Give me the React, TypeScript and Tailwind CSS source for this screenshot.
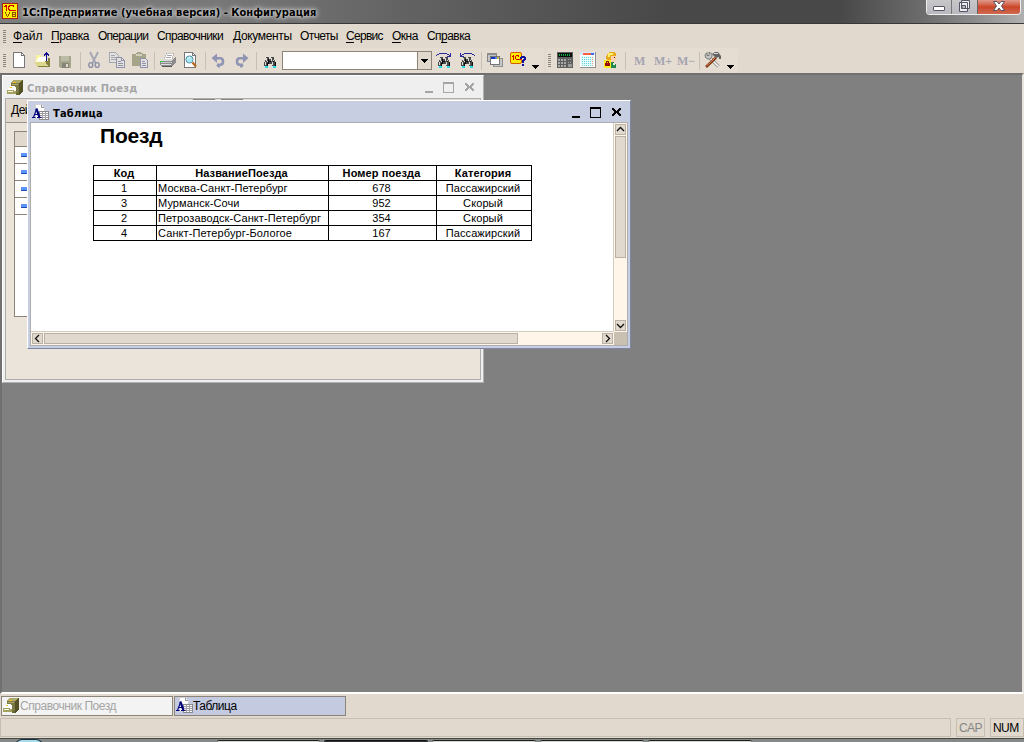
import React from "react";

type Kids = { children: React.ReactNode };

function Icon({ children }: Kids) {
  return (
    <svg width="18" height="18" viewBox="0 0 18 18" className="block shrink-0" shapeRendering="crispEdges">
      {children}
    </svg>
  );
}

const Grip = () => (
  <div className="flex h-[13px] w-[3px] shrink-0 flex-col justify-between">
    {[0, 1, 2, 3, 4, 5, 6].map((i) => (
      <i key={i} className="h-px bg-[#8a857c]" />
    ))}
  </div>
);

const Sep = () => <div className="h-[18px] w-px shrink-0 bg-[#c6c0b5]" />;

const DropArrow = () => (
  <svg width="7" height="4" viewBox="0 0 7 4" className="mt-3 block shrink-0" shapeRendering="crispEdges">
    <path d="M0 0H7V1H6V2H5V3H4V4H3V3H2V2H1V1H0Z" />
  </svg>
);

const PageIcon = () => (
  <Icon>
    <path d="M3.5 1.5H11.5L14.5 4.5V16.5H3.5Z" fill="#fff" stroke="#77777b" />
    <path d="M11.5 2V4.5H14" fill="none" stroke="#77777b" />
  </Icon>
);

const OpenIcon = () => (
  <Icon>
    <path d="M3 4H7L9 6H14V10H3Z" fill="#f8f59a" />
    <path d="M4 8L7 6H14V11H4Z" fill="#fff" />
    <path d="M1 10H12L15 16H4Z" fill="#ddd890" />
    <path d="M2 10H12" stroke="#fffbd0" />
    <path d="M15 7H17V16H5V15H15L12 10H15Z" fill="#85803a" />
    <path d="M13 1H14V2H15V3H16V5H15V4H14V10H13V4H12V5H11V3H12V2H13Z" fill="#10108c" />
  </Icon>
);

const SaveIcon = () => (
  <Icon>
    <path d="M3 5H15V17H4L3 16Z" fill="#a5a58c" />
    <path d="M5 5H13V10H5Z" fill="#bcbca4" />
    <path d="M6 12H13V17H6Z" fill="#858577" />
    <path d="M10 13H12V16H10Z" fill="#dedace" />
  </Icon>
);

const CutIcon = () => (
  <Icon>
    <g shapeRendering="auto" fill="none">
      <path d="M5 1L10.5 12M13 1L7.5 12" stroke="#a3a5b5" strokeWidth="1.8" />
      <ellipse cx="5.8" cy="14" rx="2" ry="2.4" stroke="#8e90a8" strokeWidth="1.4" />
      <ellipse cx="12.2" cy="14" rx="2" ry="2.4" stroke="#8e90a8" strokeWidth="1.4" />
    </g>
  </Icon>
);

const CopyIcon = () => (
  <Icon>
    <path d="M1.5 1.5H7.5L10.5 4.5V11.5H1.5Z" fill="#e4e1dc" stroke="#a5a7b5" />
    <path d="M3 4.5H7M3 6.5H8M3 8.5H8" stroke="#a5a7b5" />
    <path d="M8.5 6.5H13.5L16.5 9.5V16.5H8.5Z" fill="#e4e1dc" stroke="#8f93ad" />
    <path d="M10 10.5H13M10 12.5H15M10 14.5H15M13.5 7V9.5H16" fill="none" stroke="#8f93ad" />
  </Icon>
);

const PasteIcon = () => (
  <Icon>
    <path d="M1 3H4L5 2H6V1H10V2H11L12 3H15V15H1Z" fill="#a5a58a" />
    <path d="M5 3H11V5H5Z" fill="#d0cfb9" />
    <path d="M9.5 7.5H14.5L16.5 9.5V16.5H9.5Z" fill="#e4e1dc" stroke="#8f93ad" />
    <path d="M11 10.5H14M11 12.5H15M11 14.5H15" stroke="#8f93ad" />
  </Icon>
);

const PrintIcon = () => (
  <Icon>
    <path d="M5 8L8 2H15L13 8Z" fill="#fff" stroke="#a6a6a6" strokeWidth="0.6" />
    <path d="M8 4.5H13M7 6.5H12" stroke="#a5a5a5" />
    <path d="M1 10L4 8H14L17 6V11L13 15H2L1 14Z" fill="#8c8c8c" />
    <path d="M1 10L4 8H14L13 10Z" fill="#dadada" />
    <path d="M2 11.5H13" stroke="#c8c8c8" />
    <path d="M2 13.5H12" stroke="#e0e0e0" />
    <path d="M3 15.5H13" stroke="#555" />
    <path d="M1 10H4V11H1Z" fill="#25d42a" />
  </Icon>
);

const PreviewIcon = () => (
  <Icon>
    <path d="M3.5 1.5H11.5L14.5 4.5V16.5H3.5Z" fill="#fff" stroke="#77777b" />
    <path d="M11.5 2V4.5H14" fill="none" stroke="#77777b" />
    <g shapeRendering="auto">
      <circle cx="8.5" cy="8.5" r="3.6" fill="#a8e8f2" stroke="#5d91a5" />
      <path d="M7 7.5Q8 6 9 6.5" stroke="#fff" fill="none" />
      <path d="M11.5 11.5L15 15.5" stroke="#b8651d" strokeWidth="2.2" />
    </g>
  </Icon>
);

const TurnPath = () => (
  <g shapeRendering="auto">
    <path d="M6 6.2H10.2Q13 6.2 13 9.4Q13 12.6 10.2 12.8H7" fill="none" stroke="#9195b4" strokeWidth="2.6" />
    <path d="M1.5 6L7 1.5V11Z" fill="#9195b4" />
    <path d="M6 13H10V15.5H8Z" fill="#9195b4" />
  </g>
);

const UndoIcon = () => (
  <Icon>
    <TurnPath />
  </Icon>
);

const RedoIcon = () => (
  <Icon>
    <g transform="translate(17 0) scale(-1 1)">
      <TurnPath />
    </g>
  </Icon>
);

const Glasses = () => (
  <>
    <path d="M5 5H8V7H10V5H13V8H14V10H15V15H11V12H7V15H3V10H4V8H5Z" fill="#4a4a4a" />
    <path d="M5 6H6V9H5ZM10 6H11V9H10ZM4 10H5V13H4ZM11 10H12V13H11ZM6 9H7V10H6ZM12 8H13V9H12Z" fill="#dcdcdc" />
    <path d="M7 7H8V12H7ZM12 9H13V10H12ZM6 11H7V14H6ZM14 10H15V14H14ZM8 9H10V10H8Z" fill="#0c0c0c" />
    <path d="M4 14H7V16H4ZM12 14H15V16H12Z" fill="#29d8e2" />
    <path d="M3 14H4V15H3ZM11 14H12V15H11Z" fill="#bff" />
  </>
);

const FindIcon = () => (
  <Icon>
    <Glasses />
  </Icon>
);

const FindNextIcon = () => (
  <Icon>
    <Glasses />
    <path d="M1 3H2V4H1ZM2 2H4V3H2ZM4 1H12V2H4ZM12 2H14V3H12ZM14 3H15V4H14ZM15 1H16V5H12V4H15Z" fill="#29299a" />
  </Icon>
);

const FindPrevIcon = () => (
  <Icon>
    <Glasses />
    <g transform="translate(18 0) scale(-1 1)">
      <path d="M1 3H2V4H1ZM2 2H4V3H2ZM4 1H12V2H4ZM12 2H14V3H12ZM14 3H15V4H14ZM15 1H16V5H12V4H15Z" fill="#29299a" />
    </g>
  </Icon>
);

const WindowsIcon = () => (
  <Icon>
    <path d="M1.5 2.5H10.5V10.5H1.5Z" fill="#c4c4c4" stroke="#858585" />
    <path d="M1 2H11V4H1Z" fill="#8c8c8c" />
    <path d="M7.5 7.5H16.5V15.5H7.5Z" fill="#c8c8c8" stroke="#909090" />
    <path d="M4.5 5.5H13.5V13.5H4.5Z" fill="#fff" stroke="#777" />
    <path d="M5 6H9V8H5Z" fill="#1238c0" />
    <path d="M9 6H11V8H9Z" fill="#5578d8" />
    <path d="M11 6H13V8H11Z" fill="#d9b640" />
  </Icon>
);

const HelpIcon = () => (
  <Icon>
    <rect x="0.5" y="1.5" width="11" height="11" rx="1.5" fill="#ffed00" stroke="#d95a00" shapeRendering="auto" />
    <path d="M2 5H3V4H4V9H3V6H2ZM6 4H9V5H6ZM5 5H6V8H5ZM6 8H11V9H6ZM8 5H9V6H8Z" fill="#d40000" />
    <path d="M11 5H15V6H16V9H15V10H14V12H12V9H13V8H14V7H12V8H10V6H11ZM12 13H14V15H12Z" fill="#11119b" />
  </Icon>
);

const CalcIcon = () => (
  <Icon>
    <path d="M1 1H17V17H1Z" fill="#5f5f5f" />
    <path d="M2 2H16V6H2Z" fill="#0c0c0c" />
    <path d="M3 4H15" stroke="#11b047" strokeWidth="2" strokeDasharray="1 1" />
    <path d="M2 8.5H10M2 11.5H10M2 14.5H10" stroke="#a8a8a8" strokeWidth="2" strokeDasharray="2 1" />
    <path d="M12 8.5H16M12 11.5H16" stroke="#aaa" strokeDasharray="1 1" />
    <path d="M12 13H16V16H12Z" fill="#999" />
  </Icon>
);

const CalendarIcon = () => (
  <Icon>
    <path d="M1 1H17V17H1Z" fill="#8f8f8f" />
    <path d="M1 1H16V16H1Z" fill="#fff" />
    <path d="M1 1H16V4H1Z" fill="#d8e9ff" />
    <path d="M4 3H12" stroke="#ff6041" strokeWidth="2" />
    <path d="M12 3H15" stroke="#4169e2" strokeWidth="2" />
    <path d="M2 5H15V15H2Z" fill="#e2fbfb" />
    <path d="M3 6.5H15M3 8.5H15M3 10.5H15M3 12.5H15M3 14.5H15" stroke="#6cd2da" strokeDasharray="1 1" />
    <path d="M13.5 6V15" stroke="#ff9d78" strokeDasharray="1 1" />
  </Icon>
);

const UserIcon = () => (
  <Icon>
    <path d="M5 3L7 1H12L14 3V6H11V10H6L4 7Z" fill="#e9a91c" />
    <path d="M6 2H11V4H8V6H6Z" fill="#fff06b" />
    <path d="M9 5H14V9L12 12H9Z" fill="#ffd1b0" />
    <path d="M12 6H13V7H12Z" fill="#3a2a18" />
    <path d="M9 11H11L14 14V17H9Z" fill="#208a4e" />
    <path d="M11 12H13V14H11Z" fill="#f0f0e0" />
    <path d="M2 9H9V17H2Z" fill="#ffee19" />
    <path d="M3 12H8V15H3Z" fill="#970c0c" />
    <path d="M4.5 12V10.5H6.5V12" fill="none" stroke="#970c0c" />
  </Icon>
);

const ToolsIcon = () => (
  <Icon>
    <g shapeRendering="auto">
      <path d="M5 6L14.5 15.5" stroke="#777" strokeWidth="3" />
      <path d="M6 7L14.5 15.5" stroke="#fff" strokeWidth="1.6" />
      <path d="M1 4L3 1.5V4.5H5V1L8 3V6L6 8H4L1.5 6.5Z" fill="#c5c5c5" stroke="#666" strokeWidth="0.8" />
      <path d="M12 6.5L2 16" stroke="#7d3010" strokeWidth="2.6" />
      <path d="M12 6L2.5 15" stroke="#e09860" />
      <path d="M8 3L11 1H14L17 5V8H15V6L12 7Z" fill="#636363" />
      <path d="M10 2.5H14" stroke="#ddd" />
    </g>
  </Icon>
);

const CatalogIcon = () => (
  <Icon>
    <path d="M4 3L7 1H16L13 4H4Z" fill="#aba96c" />
    <path d="M4 4H12V15H4Z" fill="#7c7a44" />
    <path d="M12 4L16 1V12L12 16Z" fill="#545225" />
    <path d="M6 3H9V4H6Z" fill="#ffbd19" />
    <path d="M5 5.5H11" stroke="#aaa870" />
    <path d="M1 9L3 7H7L9 9V13H1Z" fill="#fff" />
    <path d="M3 8H5V9H3Z" fill="#ffbd19" />
    <path d="M0 11H7V12H9V15H0Z" fill="#a3a162" />
    <path d="M1 12H6V13H1Z" fill="#fffbe0" />
    <path d="M9 14H12V16H9Z" fill="#6b692f" />
  </Icon>
);

const TableIcon = () => (
  <Icon>
    <path d="M3.5 0.5H9.5L12.5 3.5V14.5H3.5Z" fill="#fff" stroke="#d0d0d8" />
    <path d="M9.5 1V3.5H12" fill="none" stroke="#999" />
    <path d="M7.5 7.5H16.5V15.5H7.5Z" fill="#fff" stroke="#8a8a8e" />
    <path d="M8 9.5H16M8 11.5H16M8 13.5H16M10.5 8V15M13.5 8V15" stroke="#a0a0a4" />
    <g shapeRendering="auto" stroke="#00007b" fill="none">
      <path d="M1.6 13L4.6 5" strokeWidth="1.1" />
      <path d="M4.3 4.5L7.4 13" strokeWidth="2.2" />
      <path d="M2.5 10.5H6" />
      <path d="M0 13.5H3.5M5 13.5H9.5" />
    </g>
  </Icon>
);

function WindowButtons() {
  return (
    <svg width="52" height="12" viewBox="0 0 52 12" className="block" shapeRendering="crispEdges" fill="currentColor">
      <path d="M0 9H8V11H0Z" />
      <path fillRule="evenodd" d="M18 0H29V11H18ZM19 2V10H28V2Z" />
      <path d="M40 1H42V2H43V3H44V4H45V3H46V2H47V1H49V3H48V4H47V6H48V7H49V9H47V8H46V7H45V6H44V7H43V8H42V9H40V7H41V6H42V4H41V3H40Z" />
    </svg>
  );
}

const menus: [string, string, string, string][] = [
  ["", "Ф", "айл", "w-[38px] tracking-[0px]"],
  ["", "П", "равка", "w-[47px] tracking-[-0.4px]"],
  ["", "", "Операции", "w-[59px] tracking-[-0.75px]"],
  ["", "", "Справочники", "w-[76px] tracking-[-0.6px]"],
  ["", "", "Документы", "w-[67px] tracking-[-0.35px]"],
  ["", "", "Отчеты", "w-[46px] tracking-[-0.6px]"],
  ["", "С", "ервис", "w-[46px] tracking-[-0.7px]"],
  ["", "О", "кна", "w-[35px] tracking-[-0.5px]"],
  ["Сп", "р", "авка", "w-[50px] tracking-[-0.55px]"],
];

const rows = [
  ["1", "Москва-Санкт-Петербург", "678", "Пассажирский"],
  ["3", "Мурманск-Сочи", "952", "Скорый"],
  ["2", "Петрозаводск-Санкт-Петербург", "354", "Скорый"],
  ["4", "Санкт-Петербург-Бологое", "167", "Пассажирский"],
];

function ScrollButton({ d }: { d: string }) {
  return (
    <div className="h-[11px] w-[11px] shrink-0 border border-[#b8b1a4] bg-[#e1d9cd]">
      <svg width="9" height="9" viewBox="0 0 9 9" className="block">
        <path d={d} stroke="#111" strokeWidth="1.3" fill="none" />
      </svg>
    </div>
  );
}

function CatalogWindow() {
  return (
    <section className="absolute left-0 top-0 flex h-[308px] w-[482px] flex-col border border-b-[#b0b0b0] border-l-white border-r-[#b0b0b0] border-t-white bg-[#efefef] px-[2px] pb-[2px]">
      <header className="flex h-[22px] shrink-0 items-center pl-[2px] pt-[2px] text-[#a5a5a5]">
        <CatalogIcon />
        <span className="ml-[2px] grow whitespace-nowrap pt-[2px] font-['DejaVu_Sans_Condensed'] text-[11px] font-bold leading-[16px] tracking-[0.2px]">Справочник Поезд</span>
        <WindowButtons />
        <span className="w-[4px]" />
      </header>
      <div className="flex grow flex-col border border-[#adadad] bg-[#ebe4da]">
        <div className="flex h-[24px] shrink-0 border-b border-[#999287] bg-[#e1d9cd] pl-[5px] text-[12px] leading-[23px] tracking-[-0.5px]">
          <span className="w-[30px]">Дей</span>
          <span className="ml-[152px] h-px w-[22px] bg-[#8b8579]" />
          <span className="ml-[6px] h-px w-[22px] bg-[#8b8579]" />
        </div>
        <div className="ml-[8px] mt-[8px] flex h-[186px] w-[430px] flex-col border border-[#8c8577] bg-white">
          <div className="h-[15px] border-b border-[#8c8577] bg-[#e1d9cd]" />
          {rows.map((r) => (
            <div key={r[0]} className="flex h-[17px] items-center border-b border-[#8c8577] pl-[6px]">
              <span className="h-[4px] w-[9px] border-b border-[#254caa] bg-[#5b93ff]" />
            </div>
          ))}
        </div>
      </div>
    </section>
  );
}

function TableWindow() {
  const cell = "border border-black py-0 pl-0 pr-[2px] h-[15px] leading-[14px]";
  return (
    <section className="absolute left-[25px] top-[25px] flex h-[249px] w-[604px] flex-col border border-b-[#7d87a4] border-l-white border-r-[#7d87a4] border-t-white bg-[#c8cee2] pb-[2px] pl-[2px] pr-[2px]">
      <header className="flex h-[21px] shrink-0 items-center pl-[2px] pt-[2px]">
        <TableIcon />
        <span className="ml-[3px] grow pt-[2px] font-['DejaVu_Sans_Condensed'] text-[11px] font-bold leading-[16px] tracking-[0.2px]">Таблица</span>
        <WindowButtons />
        <span className="w-[4px]" />
      </header>
      <div className="flex grow flex-col border border-[#adadad] bg-white">
        <div className="flex h-[209px]">
          <div className="grow overflow-hidden border-b border-r border-[#d0ccc4] pl-[62px]">
            <h1 className="ml-[7px] mt-px h-[24px] text-[21px] font-bold leading-[24px] tracking-[-0.2px]">Поезд</h1>
            <table className="mt-[17px] w-[439px] table-fixed border-collapse text-center text-[11px]">
              <colgroup>
                <col className="w-[63px]" />
                <col className="w-[172px]" />
                <col className="w-[108px]" />
                <col className="w-[95px]" />
              </colgroup>
              <thead>
                <tr className="tracking-[0.1px]">
                  <th className={cell}>Код</th>
                  <th className={cell}>НазваниеПоезда</th>
                  <th className={cell}>Номер поезда</th>
                  <th className={cell}>Категория</th>
                </tr>
              </thead>
              <tbody>
                {rows.map((r) => (
                  <tr key={r[0]} className="tracking-[0.1px]">
                    <td className={cell}>{r[0]}</td>
                    <td className="h-[15px] whitespace-nowrap border border-black py-0 pl-[1px] pr-0 text-left leading-[14px]">{r[1]}</td>
                    <td className={cell}>{r[2]}</td>
                    <td className={cell}>{r[3]}</td>
                  </tr>
                ))}
              </tbody>
            </table>
          </div>
          <div className="flex w-[13px] shrink-0 flex-col items-center bg-[#fff5e9] py-px">
            <ScrollButton d="M1 6L4.5 2.5L8 6" />
            <div className="mt-px h-[122px] w-[11px] border border-[#b8b1a4] bg-[#e1d9cd]" />
            <div className="grow" />
            <ScrollButton d="M1 3L4.5 6.5L8 3" />
          </div>
        </div>
        <div className="flex h-[13px] bg-[#fff5e9]">
          <div className="flex grow items-center pl-px pr-px">
            <ScrollButton d="M6 1L2.5 4.5L6 8" />
            <div className="ml-px h-[11px] w-[474px] border border-[#b8b1a4] bg-[#e1d9cd]" />
            <div className="grow" />
            <ScrollButton d="M3 1L6.5 4.5L3 8" />
          </div>
          <div className="w-[13px] bg-[#c9c0b2]" />
        </div>
      </div>
    </section>
  );
}

export default function App() {
  return (
    <div className="flex h-[742px] w-[1024px] flex-col overflow-hidden bg-[#e1d9cd] font-['Liberation_Sans',sans-serif] text-black">
      <header className="flex h-[24px] shrink-0 border-b border-[#37383a] bg-[linear-gradient(90deg,#7d7d7d_0%,#777_22%,#626262_40%,#484848_65%,#484848_82%,#6c6c6c_90%,#8a8a8a_95%,#b0b0b0_100%)]">
        <svg width="17" height="17" viewBox="0 0 17 17" className="ml-[1px] mt-[3px] block shrink-0" shapeRendering="crispEdges">
          <rect x="1" y="0" width="16" height="16" rx="1" fill="#a92010" />
          <rect x="2" y="1" width="14" height="14" fill="#ffee00" />
          <path d="M3 3H4V2H6V8H5V4H3ZM8 2H13V4H12V3H9V4H8V6H9V7H15V8H8V7H7V3H8Z" fill="#d40000" />
          <path d="M4 9H5V11H6V13H7V11H8V9H9V11H8V13H7V14H6V13H5V11H4ZM11 9H15V14H11ZM12 10V11H14V10ZM12 12V13H14V12Z" fill="#8d5000" fillRule="evenodd" />
        </svg>
        <h1 className="ml-[4px] w-[300px] whitespace-nowrap pt-px font-['DejaVu_Sans_Condensed'] text-[11px] font-bold leading-[24px] tracking-[0.05px] [text-shadow:0_0_3px_#ddd,0_0_5px_#ccc,0_0_7px_#bbb]">1С:Предприятие (учебная версия) - Конфигурация</h1>
        <div className="ml-auto mr-[3px] flex h-[15px] w-[95px] overflow-hidden rounded-b-[4px] border border-t-0 border-[#eee]">
          <div className="flex w-[25px] items-end justify-center border-r border-[#777] bg-linear-to-b from-[#c8c8ca] to-[#b8b8be] pb-[3px]">
            <i className="h-[5px] w-[12px] rounded-[1px] border border-[#555566] bg-white" />
          </div>
          <div className="flex w-[26px] justify-center border-r border-[#666] bg-linear-to-b from-[#c8c8ca] to-[#b8b8be]">
            <svg width="13" height="13" viewBox="0 0 13 13" className="block">
              <path d="M3.5 0.5H11.5V8.5H3.5ZM1.5 2.5H9.5V11.5H1.5Z" fill="#eee" stroke="#555566" />
              <path d="M4 5.5H7.5V8.5H4Z" fill="#bbb" stroke="#555566" />
            </svg>
          </div>
          <div className="flex grow justify-center bg-linear-to-b from-[#e09a8c] via-[#cb4528] to-[#cf6a50]">
            <svg width="14" height="13" viewBox="0 0 14 13" className="block">
              <path d="M1.5 1.5H5L7 4L9 1.5H12.5L9.5 6L12.5 10.5H9L7 8L5 10.5H1.5L4.5 6Z" fill="#fff" stroke="#555566" />
            </svg>
          </div>
        </div>
      </header>

      <nav className="flex h-[24px] shrink-0 items-center pl-[3px] text-[12px]">
        <Grip />
        <span className="w-[7px] shrink-0" />
        {menus.map(([before, key, after, style]) => (
          <span key={before + key + after} className={`${style} shrink-0 whitespace-nowrap`}>
            {before}
            <u className="underline-offset-2">{key}</u>
            {after}
          </span>
        ))}
      </nav>

      <div className="flex h-[25px] shrink-0 items-center">
        <div className="flex h-[25px] w-[544px] items-center rounded-[3px] bg-[#e5ddd2] pl-[3px]">
          <Grip />
          <div className="ml-[4px] flex items-center gap-[5px] pb-[2px]">
            <PageIcon /><OpenIcon /><SaveIcon />
          </div>
          <div className="ml-[6px] mr-[4px]"><Sep /></div>
          <div className="flex items-center gap-[5px] pb-[2px]">
            <CutIcon /><CopyIcon /><PasteIcon />
          </div>
          <div className="ml-[5px] mr-[4px]"><Sep /></div>
          <div className="flex items-center gap-[4px] pb-[2px]">
            <PrintIcon /><PreviewIcon />
          </div>
          <div className="ml-[6px] mr-[4px]"><Sep /></div>
          <div className="flex items-center gap-[5px]">
            <UndoIcon /><RedoIcon />
          </div>
          <div className="ml-[5px] mr-[4px]"><Sep /></div>
          <FindIcon />
          <div className="ml-[3px] flex h-[19px] w-[150px] border border-[#8c8577] bg-white">
            <span className="grow" />
            <div className="flex w-[14px] justify-center border-l border-[#8c8577] bg-[#e1d9cd]">
              <svg width="7" height="4" viewBox="0 0 7 4" className="mt-[7px] block" shapeRendering="crispEdges">
                <path d="M0 0H7V1H6V2H5V3H4V4H3V3H2V2H1V1H0Z" />
              </svg>
            </div>
          </div>
          <div className="ml-[3px] flex items-center gap-[5px]">
            <FindNextIcon /><FindPrevIcon />
          </div>
          <div className="ml-[5px] mr-[4px]"><Sep /></div>
          <div className="flex items-center gap-[6px] pb-px">
            <WindowsIcon /><HelpIcon />
          </div>
          <span className="w-[4px]" />
          <DropArrow />
        </div>
        <div className="ml-[2px] flex h-[25px] w-[192px] items-center rounded-[3px] bg-[#e5ddd2] pl-[2px]">
          <Grip />
          <div className="ml-[5px] flex items-center gap-[5px] pb-[2px]">
            <CalcIcon /><CalendarIcon /><UserIcon />
          </div>
          <div className="ml-[5px] mr-[8px]"><Sep /></div>
          <div className="flex h-[17px] w-[65px] pt-[2px] font-['Liberation_Serif'] text-[12px] font-bold leading-[14px] text-[#a4a4b0]">
            <span className="w-[20px]">M</span>
            <span className="w-[23px]">M+</span>
            <span>M−</span>
          </div>
          <div className="mr-[4px]"><Sep /></div>
          <div className="pb-[2px]"><ToolsIcon /></div>
          <span className="w-[5px]" />
          <DropArrow />
        </div>
      </div>

      <main className="relative h-[621px] shrink-0 border-b-2 border-l-2 border-r-2 border-t-2 border-b-white border-l-[#707070] border-r-[#e8e4de] border-t-[#707070] bg-[#808080]">
        <CatalogWindow />
        <TableWindow />
      </main>

      <div className="flex h-[24px] shrink-0 gap-[1px] pl-px pt-[2px] text-[12px]">
        <div className="flex h-[20px] w-[172px] items-center border border-[#8c8577] bg-[#f3f3f3] pl-px text-[#a5a5a5]">
          <CatalogIcon />
          <span className="-ml-px tracking-[-0.45px]">Справочник Поезд</span>
        </div>
        <div className="flex h-[20px] w-[172px] items-center border border-[#8c8577] bg-[#c4cae0] pl-px">
          <TableIcon />
          <span className="-ml-px tracking-[-0.5px]">Таблица</span>
        </div>
      </div>
      <footer className="flex h-[19px] shrink-0 text-[12px] leading-[18px] tracking-[-0.6px]">
        <div className="w-[951px] border border-[#c6beb1]" />
        <div className="ml-[5px] w-[29px] border border-[#c6beb1] pl-[2px] text-[#858585]">CAP</div>
        <div className="ml-[5px] w-[34px] border border-[#c6beb1] pl-[2px]">NUM</div>
      </footer>
      <div className="mt-px flex h-[4px] shrink-0 border-t border-[#444946] bg-[#858987]">
        <div className="ml-[15px] h-[7px] w-[28px] rounded-t-full border border-[#18313d] bg-[#a9dbed]" />
        <div className="ml-[174px] mt-px h-[3px] w-[103px] rounded-t-[2px] border-t border-[#222] bg-[#d4d2cf]" />
        <div className="ml-[4px] mt-px h-[3px] w-[104px] rounded-t-[2px] border-t border-[#111] bg-[#333]" />
        <div className="ml-[4px] mt-px h-[3px] w-[104px] rounded-t-[2px] border-t border-[#222] bg-[#d4d2cf]" />
        <div className="ml-[4px] mt-px h-[3px] w-[104px] rounded-t-[2px] border-t border-[#222] bg-[#d4d2cf]" />
        <div className="ml-[4px] mt-px h-[3px] w-[104px] rounded-t-[2px] border-t border-[#222] bg-[#d4d2cf]" />
      </div>
    </div>
  );
}
